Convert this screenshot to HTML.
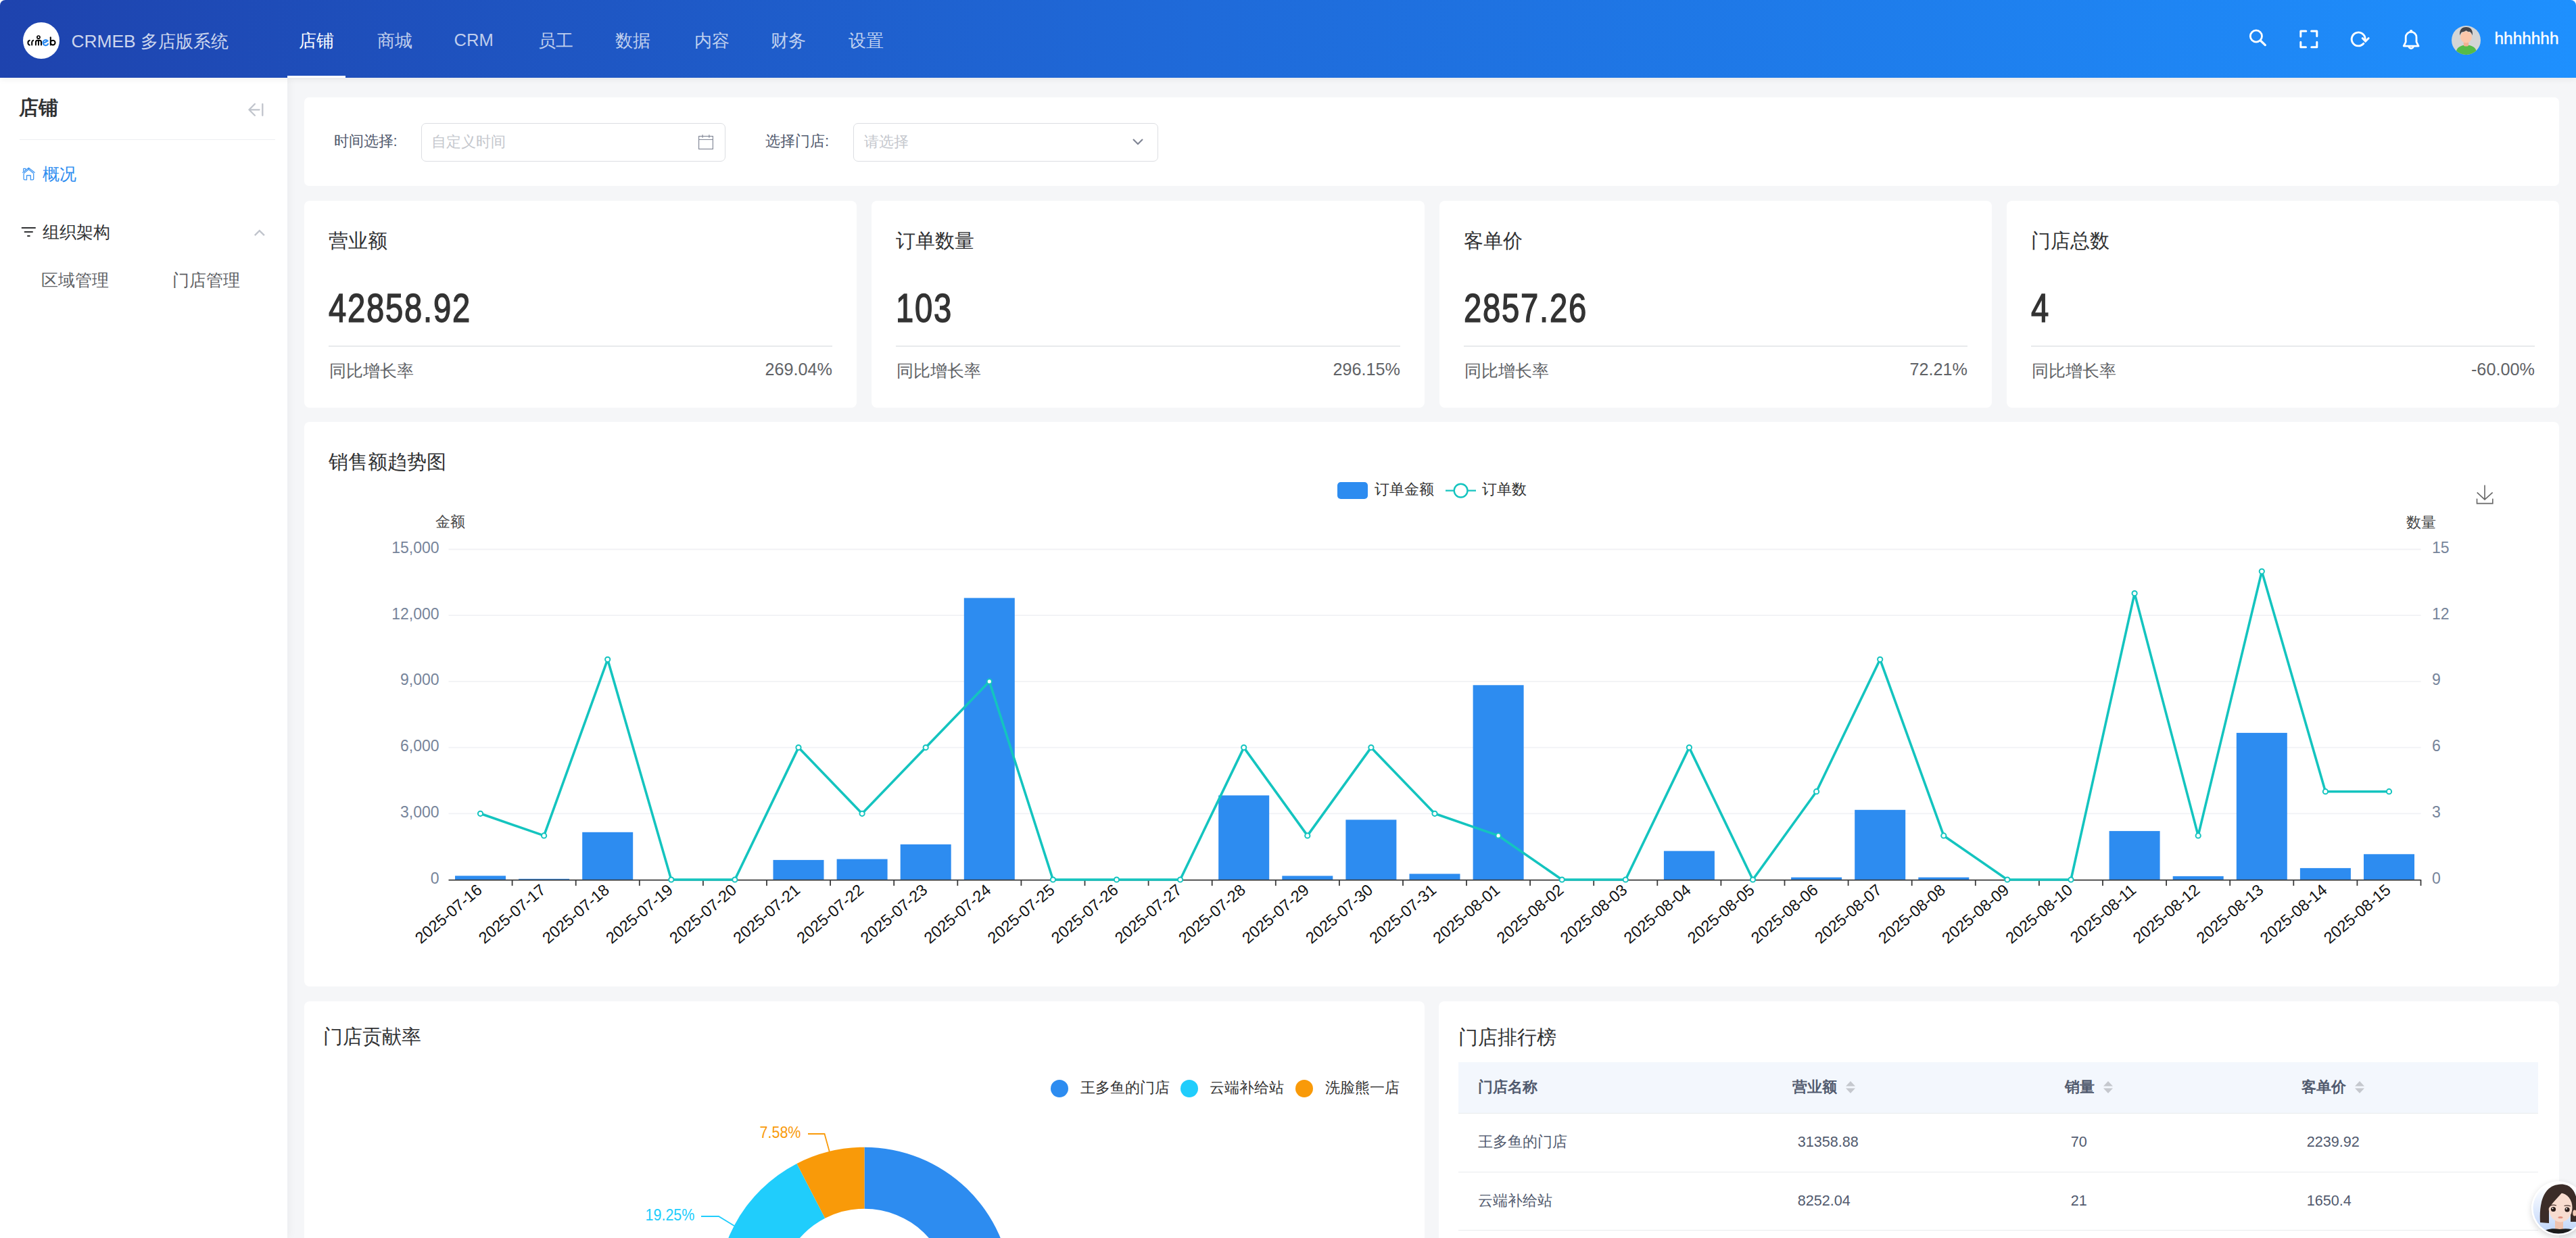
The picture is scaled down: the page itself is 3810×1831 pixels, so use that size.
<!DOCTYPE html>
<html><head><meta charset="utf-8"><title>CRMEB</title>
<style>
html,body{margin:0;padding:0;width:3810px;height:1831px;overflow:hidden;background:#fff;font-family:'Liberation Sans', sans-serif;}
.t{position:absolute;white-space:nowrap;}
.b{position:absolute;box-sizing:border-box;}
svg{position:absolute;overflow:visible;}
</style></head><body>

<div class="b" style="left:425px;top:115px;width:3385px;height:1716px;background:#f5f6f8;"></div>
<div class="b" style="left:0px;top:115px;width:425px;height:1716px;background:#fff;box-shadow:2px 0 12px rgba(0,21,41,0.05);"></div>
<div class="b" style="left:0;top:0;width:3810px;height:115px;border-radius:8px 8px 0 0;background:linear-gradient(90deg,#1e43ae 0%,#1f69d8 45%,#1e90fe 100%);box-shadow:0 2px 10px rgba(0,0,0,0.07);"></div>
<div class="b" style="left:34px;top:33px;width:54px;height:54px;border-radius:50%;background:#fff;"></div>
<svg style="left:0;top:0" width="100" height="100" viewBox="0 0 100 100" fill="none" stroke="#000" stroke-width="2" stroke-linecap="round" stroke-linejoin="round">
<path d="M43.8 59.8A3.6 3.6 0 0 0 43.8 66.6"/>
<path d="M47.2 66.4V62.4Q47.4 60.2 49.3 59.7"/>
<path d="M52.9 66.6V62.2Q52.9 59.7 55.4 59.7H58.5Q61 59.7 61 62.2V66.6M56.95 59.7V66.6"/>
<circle cx="56.95" cy="55.1" r="2.1" stroke-width="1.7"/>
<path d="M65.6 63.2L70.6 60.5A4 4 0 1 0 71.1 64.9" stroke="#2d8cf0" stroke-width="2.2"/>
<path d="M74.8 55.3V66.6"/><circle cx="78.2" cy="63.1" r="3.4"/>
</svg>
<div class="t" style="left:105.4px;top:47.8px;font-size:26.4px;line-height:26.4px;color:rgba(255,255,255,0.78);font-weight:normal;">CRMEB <span style="font-size:26px">多店版系统</span></div>
<div class="t" style="left:441.5px;top:46.7px;font-size:26.2px;line-height:26.2px;color:#fff;font-weight:normal;">店铺</div>
<div class="t" style="left:557.5px;top:46.7px;font-size:26.2px;line-height:26.2px;color:rgba(255,255,255,0.72);font-weight:normal;">商城</div>
<div class="t" style="left:671.5px;top:46.9px;font-size:25.6px;line-height:25.6px;color:rgba(255,255,255,0.72);font-weight:normal;">CRM</div>
<div class="t" style="left:795.5px;top:46.7px;font-size:26.2px;line-height:26.2px;color:rgba(255,255,255,0.72);font-weight:normal;">员工</div>
<div class="t" style="left:909.5px;top:46.7px;font-size:26.2px;line-height:26.2px;color:rgba(255,255,255,0.72);font-weight:normal;">数据</div>
<div class="t" style="left:1026.5px;top:46.7px;font-size:26.2px;line-height:26.2px;color:rgba(255,255,255,0.72);font-weight:normal;">内容</div>
<div class="t" style="left:1139.5px;top:46.7px;font-size:26.2px;line-height:26.2px;color:rgba(255,255,255,0.72);font-weight:normal;">财务</div>
<div class="t" style="left:1254.5px;top:46.7px;font-size:26.2px;line-height:26.2px;color:rgba(255,255,255,0.72);font-weight:normal;">设置</div>
<div class="b" style="left:425px;top:112px;width:86px;height:3px;background:#fff;"></div>
<svg style="left:0;top:0" width="3810" height="115" viewBox="0 0 3810 115" fill="none" stroke="#fff">
<circle cx="3336.9" cy="53.5" r="8.6" stroke-width="2.8"/>
<line x1="3343.6" y1="60.2" x2="3350.3" y2="66.6" stroke-width="3.3" stroke-linecap="round"/>
<path d="M3402.8 54V46.1h8M3418.6 46.1h8.2V53.4M3426.8 62.3v7.5h-8M3410.5 69.8h-7.7V62.3" stroke-width="3" stroke-linecap="round" stroke-linejoin="round"/>
<path d="M3495.9 64.3A10 10 0 1 1 3498.2 58" stroke-width="2.9" stroke-linecap="round"/>
<path d="M3494.2 56.6L3498.7 61.2L3503.2 56.6" stroke-width="2.9" stroke-linecap="round"/>
<path d="M3558.2 62V55.2A7.9 8 0 0 1 3574 55.2V62L3577 68.1H3555.2Z" stroke-width="2.8" stroke-linejoin="round"/>
<circle cx="3566.1" cy="46.2" r="1.6" fill="#fff" stroke-width="1.4"/>
<path d="M3562.6 68.2A3.5 3.4 0 0 0 3569.6 68.2" stroke-width="2.6"/>
</svg>
<svg style="left:3626px;top:38px" width="43" height="43" viewBox="0 0 43 43">
<defs><clipPath id="av"><circle cx="21.5" cy="21.5" r="21.5"/></clipPath></defs>
<g clip-path="url(#av)">
<rect width="43" height="43" fill="#d3d5d6"/>
<ellipse cx="21.8" cy="39" rx="15" ry="10.5" fill="#56bb48"/>
<rect x="17.8" y="23" width="7.3" height="7.5" rx="2" fill="#f2b092"/>
<ellipse cx="21.5" cy="16.9" rx="8.4" ry="8.6" fill="#fcc6a9"/>
<path d="M12.3 14.5C11 6.5 15 2 21.5 2C28 2 32 6.5 30.8 14.5C30 11.5 28.5 9.5 26.5 8.8C24.5 9.2 22.5 8.3 21.5 7C20 8.5 17 9.2 15 9.5C13.8 10.8 12.8 12.5 12.3 14.5Z" fill="#454449"/>
</g></svg>
<div class="t" style="left:3689.5px;top:45.3px;font-size:24.4px;line-height:24.4px;color:#fff;font-weight:normal;-webkit-text-stroke:0.4px #fff;">hhhhhhh</div>
<div class="t" style="left:28.4px;top:145.1px;font-size:28.8px;line-height:28.8px;color:#303133;font-weight:bold;">店铺</div>
<svg style="left:355px;top:145px" width="45" height="35" viewBox="0 0 45 35" fill="none" stroke="#c0c4cc" stroke-width="2.3" stroke-linecap="round" stroke-linejoin="round">
<path d="M28.6 17.3H13.8M21.9 8.8L13.4 17.3L21.9 25.8M33.3 8.8V25.8"/></svg>
<div class="b" style="left:29px;top:205.5px;width:378px;height:1.5px;background:#eceef1;height:1.2px;"></div>
<svg style="left:25px;top:240px" width="35" height="35" viewBox="0 0 35 35" fill="none" stroke="#3d95f2" stroke-width="1.3" stroke-linejoin="round">
<path d="M8.3 15.4L17.4 8.3L26.6 15.4M10.1 16.4L17.4 10.6L24.7 16.4"/>
<path d="M10.1 16.4V24.6Q10.1 25.9 11.4 25.9H14.5V19.5H20.3V25.9H23.4Q24.7 25.9 24.7 24.6V16.4"/>
<path d="M9.8 13.6V9.3H12.9V11.4"/></svg>
<div class="t" style="left:63.0px;top:245.2px;font-size:25.2px;line-height:25.2px;color:#2d8cf0;font-weight:normal;">概况</div>
<svg style="left:30px;top:332px" width="26" height="22" viewBox="0 0 26 22" fill="none" stroke="#303133" stroke-width="2">
<path d="M2.6 5H22M6.6 10.95H18M11 16.9H13.8" stroke-linecap="round"/></svg>
<div class="t" style="left:63.0px;top:331.2px;font-size:25.2px;line-height:25.2px;color:#303133;font-weight:normal;">组织架构</div>
<svg style="left:373px;top:335px" width="22" height="18" viewBox="0 0 22 18" fill="none" stroke="#c0c4cc" stroke-width="2.4">
<path d="M3.8 13.2L10.8 6.2L17.9 13.2"/></svg>
<div class="t" style="left:60.5px;top:402.2px;font-size:25.2px;line-height:25.2px;color:#606266;font-weight:normal;">区域管理</div>
<div class="t" style="left:254.5px;top:402.2px;font-size:25.2px;line-height:25.2px;color:#606266;font-weight:normal;">门店管理</div>
<div class="b" style="left:450px;top:144px;width:3335px;height:131px;background:#fff;border-radius:7px;"></div>
<div class="t" style="left:493.6px;top:198.3px;font-size:22.2px;line-height:22.2px;color:#515a6e;font-weight:normal;">时间选择:</div>
<div class="b" style="left:623px;top:182px;width:450px;height:57px;border:1.8px solid #dcdee2;border-radius:7px;background:#fff;"></div>
<div class="t" style="left:637.6px;top:199.4px;font-size:21.6px;line-height:21.6px;color:#c5c8ce;font-weight:normal;">自定义时间</div>
<svg style="left:1030px;top:197px" width="28" height="28" viewBox="0 0 28 28" fill="none" stroke="#808695" stroke-width="1.15">
<rect x="3.6" y="4.5" width="20.8" height="18.9"/><path d="M3.6 9.5h20.8M9.1 2.2v4.5M18.9 2.2v4.5"/></svg>
<div class="t" style="left:1132.1px;top:198.3px;font-size:22.2px;line-height:22.2px;color:#515a6e;font-weight:normal;">选择门店:</div>
<div class="b" style="left:1262px;top:182px;width:451px;height:57px;border:1.8px solid #dcdee2;border-radius:7px;background:#fff;"></div>
<div class="t" style="left:1277.6px;top:199.4px;font-size:21.6px;line-height:21.6px;color:#c5c8ce;font-weight:normal;">请选择</div>
<svg style="left:1672px;top:200px" width="22" height="20" viewBox="0 0 22 20" fill="none" stroke="#808695" stroke-width="2.2">
<path d="M4 6l7 7 7-7"/></svg>
<div class="b" style="left:450px;top:297px;width:817px;height:306px;background:#fff;border-radius:8px;"></div>
<div class="t" style="left:486.4px;top:342.1px;font-size:28.8px;line-height:28.8px;color:#303133;font-weight:normal;">营业额</div>
<div class="t" style="left:486px;top:426.5px;font-size:59px;line-height:59px;font-weight:normal;color:#333;-webkit-text-stroke:1.5px #333;transform:scaleX(0.8);transform-origin:0 0;letter-spacing:2.2px;">42858.92</div>
<div class="b" style="left:486px;top:511px;width:745px;height:2px;background:#e8eaec;height:1.6px;"></div>
<div class="t" style="left:486.5px;top:536.2px;font-size:25.2px;line-height:25.2px;color:#606266;font-weight:normal;">同比增长率</div>
<div class="t" style="right:2579.2px;top:534.0px;font-size:25.2px;line-height:25.2px;color:#606266;font-weight:normal;text-align:right;">269.04%</div>
<div class="b" style="left:1289px;top:297px;width:818px;height:306px;background:#fff;border-radius:8px;"></div>
<div class="t" style="left:1325.4px;top:342.1px;font-size:28.8px;line-height:28.8px;color:#303133;font-weight:normal;">订单数量</div>
<div class="t" style="left:1325px;top:426.5px;font-size:59px;line-height:59px;font-weight:normal;color:#333;-webkit-text-stroke:1.5px #333;transform:scaleX(0.8);transform-origin:0 0;letter-spacing:2.2px;">103</div>
<div class="b" style="left:1325px;top:511px;width:746px;height:2px;background:#e8eaec;height:1.6px;"></div>
<div class="t" style="left:1325.5px;top:536.2px;font-size:25.2px;line-height:25.2px;color:#606266;font-weight:normal;">同比增长率</div>
<div class="t" style="right:1739.2px;top:534.0px;font-size:25.2px;line-height:25.2px;color:#606266;font-weight:normal;text-align:right;">296.15%</div>
<div class="b" style="left:2129px;top:297px;width:817px;height:306px;background:#fff;border-radius:8px;"></div>
<div class="t" style="left:2165.4px;top:342.1px;font-size:28.8px;line-height:28.8px;color:#303133;font-weight:normal;">客单价</div>
<div class="t" style="left:2165px;top:426.5px;font-size:59px;line-height:59px;font-weight:normal;color:#333;-webkit-text-stroke:1.5px #333;transform:scaleX(0.8);transform-origin:0 0;letter-spacing:2.2px;">2857.26</div>
<div class="b" style="left:2165px;top:511px;width:745px;height:2px;background:#e8eaec;height:1.6px;"></div>
<div class="t" style="left:2165.5px;top:536.2px;font-size:25.2px;line-height:25.2px;color:#606266;font-weight:normal;">同比增长率</div>
<div class="t" style="right:900.2px;top:534.0px;font-size:25.2px;line-height:25.2px;color:#606266;font-weight:normal;text-align:right;">72.21%</div>
<div class="b" style="left:2968px;top:297px;width:817px;height:306px;background:#fff;border-radius:8px;"></div>
<div class="t" style="left:3004.4px;top:342.1px;font-size:28.8px;line-height:28.8px;color:#303133;font-weight:normal;">门店总数</div>
<div class="t" style="left:3004px;top:426.5px;font-size:59px;line-height:59px;font-weight:normal;color:#333;-webkit-text-stroke:1.5px #333;transform:scaleX(0.8);transform-origin:0 0;letter-spacing:2.2px;">4</div>
<div class="b" style="left:3004px;top:511px;width:745px;height:2px;background:#e8eaec;height:1.6px;"></div>
<div class="t" style="left:3004.5px;top:536.2px;font-size:25.2px;line-height:25.2px;color:#606266;font-weight:normal;">同比增长率</div>
<div class="t" style="right:61.2px;top:534.0px;font-size:25.2px;line-height:25.2px;color:#606266;font-weight:normal;text-align:right;">-60.00%</div>
<div class="b" style="left:450px;top:624px;width:3335px;height:835px;background:#fff;border-radius:8px;"></div>
<div class="t" style="left:486.4px;top:669.1px;font-size:28.8px;line-height:28.8px;color:#303133;font-weight:normal;">销售额趋势图</div>
<svg style="left:0;top:0" width="3810" height="1831" viewBox="0 0 3810 1831">
<line x1="663.5" y1="1203.3" x2="3580.5" y2="1203.3" stroke="#f1f2f5" stroke-width="1.8"/>
<line x1="663.5" y1="1105.6" x2="3580.5" y2="1105.6" stroke="#f1f2f5" stroke-width="1.8"/>
<line x1="663.5" y1="1007.9" x2="3580.5" y2="1007.9" stroke="#f1f2f5" stroke-width="1.8"/>
<line x1="663.5" y1="910.2" x2="3580.5" y2="910.2" stroke="#f1f2f5" stroke-width="1.8"/>
<line x1="663.5" y1="812.5" x2="3580.5" y2="812.5" stroke="#f1f2f5" stroke-width="1.8"/>
<text x="649.6" y="1306.5" text-anchor="end" font-size="23" fill="#76849a">0</text>
<text x="3597" y="1306.5" text-anchor="start" font-size="23" fill="#76849a">0</text>
<text x="649.6" y="1208.8" text-anchor="end" font-size="23" fill="#76849a">3,000</text>
<text x="3597" y="1208.8" text-anchor="start" font-size="23" fill="#76849a">3</text>
<text x="649.6" y="1111.1" text-anchor="end" font-size="23" fill="#76849a">6,000</text>
<text x="3597" y="1111.1" text-anchor="start" font-size="23" fill="#76849a">6</text>
<text x="649.6" y="1013.4" text-anchor="end" font-size="23" fill="#76849a">9,000</text>
<text x="3597" y="1013.4" text-anchor="start" font-size="23" fill="#76849a">9</text>
<text x="649.6" y="915.7" text-anchor="end" font-size="23" fill="#76849a">12,000</text>
<text x="3597" y="915.7" text-anchor="start" font-size="23" fill="#76849a">12</text>
<text x="649.6" y="818.0" text-anchor="end" font-size="23" fill="#76849a">15,000</text>
<text x="3597" y="818.0" text-anchor="start" font-size="23" fill="#76849a">15</text>
<rect x="673.0" y="1295.3" width="75" height="5.7" fill="#2d8cf0"/>
<rect x="767.1" y="1299.8" width="75" height="1.2" fill="#2d8cf0"/>
<rect x="861.2" y="1230.8" width="75" height="70.2" fill="#2d8cf0"/>
<rect x="1143.5" y="1271.9" width="75" height="29.1" fill="#2d8cf0"/>
<rect x="1237.6" y="1270.6" width="75" height="30.4" fill="#2d8cf0"/>
<rect x="1331.7" y="1248.8" width="75" height="52.2" fill="#2d8cf0"/>
<rect x="1425.8" y="884.4" width="75" height="416.6" fill="#2d8cf0"/>
<rect x="1802.2" y="1176.4" width="75" height="124.6" fill="#2d8cf0"/>
<rect x="1896.3" y="1295.4" width="75" height="5.6" fill="#2d8cf0"/>
<rect x="1990.4" y="1212.4" width="75" height="88.6" fill="#2d8cf0"/>
<rect x="2084.5" y="1292.4" width="75" height="8.6" fill="#2d8cf0"/>
<rect x="2178.6" y="1013.3" width="75" height="287.7" fill="#2d8cf0"/>
<rect x="2460.9" y="1258.6" width="75" height="42.4" fill="#2d8cf0"/>
<rect x="2649.1" y="1297.6" width="75" height="3.4" fill="#2d8cf0"/>
<rect x="2743.2" y="1197.8" width="75" height="103.2" fill="#2d8cf0"/>
<rect x="2837.3" y="1297.6" width="75" height="3.4" fill="#2d8cf0"/>
<rect x="3119.6" y="1229.1" width="75" height="71.9" fill="#2d8cf0"/>
<rect x="3213.7" y="1295.9" width="75" height="5.1" fill="#2d8cf0"/>
<rect x="3307.8" y="1083.9" width="75" height="217.1" fill="#2d8cf0"/>
<rect x="3401.9" y="1283.9" width="75" height="17.1" fill="#2d8cf0"/>
<rect x="3496.0" y="1263.3" width="75" height="37.7" fill="#2d8cf0"/>
<line x1="663.5" y1="1301.6" x2="3580.5" y2="1301.6" stroke="#3a3a3a" stroke-width="1.8"/>
<line x1="757.6" y1="1301.0" x2="757.6" y2="1310.0" stroke="#3a3a3a" stroke-width="1.8"/>
<line x1="851.7" y1="1301.0" x2="851.7" y2="1310.0" stroke="#3a3a3a" stroke-width="1.8"/>
<line x1="945.8" y1="1301.0" x2="945.8" y2="1310.0" stroke="#3a3a3a" stroke-width="1.8"/>
<line x1="1039.9" y1="1301.0" x2="1039.9" y2="1310.0" stroke="#3a3a3a" stroke-width="1.8"/>
<line x1="1134.0" y1="1301.0" x2="1134.0" y2="1310.0" stroke="#3a3a3a" stroke-width="1.8"/>
<line x1="1228.1" y1="1301.0" x2="1228.1" y2="1310.0" stroke="#3a3a3a" stroke-width="1.8"/>
<line x1="1322.2" y1="1301.0" x2="1322.2" y2="1310.0" stroke="#3a3a3a" stroke-width="1.8"/>
<line x1="1416.3" y1="1301.0" x2="1416.3" y2="1310.0" stroke="#3a3a3a" stroke-width="1.8"/>
<line x1="1510.4" y1="1301.0" x2="1510.4" y2="1310.0" stroke="#3a3a3a" stroke-width="1.8"/>
<line x1="1604.5" y1="1301.0" x2="1604.5" y2="1310.0" stroke="#3a3a3a" stroke-width="1.8"/>
<line x1="1698.6" y1="1301.0" x2="1698.6" y2="1310.0" stroke="#3a3a3a" stroke-width="1.8"/>
<line x1="1792.7" y1="1301.0" x2="1792.7" y2="1310.0" stroke="#3a3a3a" stroke-width="1.8"/>
<line x1="1886.8" y1="1301.0" x2="1886.8" y2="1310.0" stroke="#3a3a3a" stroke-width="1.8"/>
<line x1="1980.9" y1="1301.0" x2="1980.9" y2="1310.0" stroke="#3a3a3a" stroke-width="1.8"/>
<line x1="2075.0" y1="1301.0" x2="2075.0" y2="1310.0" stroke="#3a3a3a" stroke-width="1.8"/>
<line x1="2169.0" y1="1301.0" x2="2169.0" y2="1310.0" stroke="#3a3a3a" stroke-width="1.8"/>
<line x1="2263.1" y1="1301.0" x2="2263.1" y2="1310.0" stroke="#3a3a3a" stroke-width="1.8"/>
<line x1="2357.2" y1="1301.0" x2="2357.2" y2="1310.0" stroke="#3a3a3a" stroke-width="1.8"/>
<line x1="2451.3" y1="1301.0" x2="2451.3" y2="1310.0" stroke="#3a3a3a" stroke-width="1.8"/>
<line x1="2545.4" y1="1301.0" x2="2545.4" y2="1310.0" stroke="#3a3a3a" stroke-width="1.8"/>
<line x1="2639.5" y1="1301.0" x2="2639.5" y2="1310.0" stroke="#3a3a3a" stroke-width="1.8"/>
<line x1="2733.6" y1="1301.0" x2="2733.6" y2="1310.0" stroke="#3a3a3a" stroke-width="1.8"/>
<line x1="2827.7" y1="1301.0" x2="2827.7" y2="1310.0" stroke="#3a3a3a" stroke-width="1.8"/>
<line x1="2921.8" y1="1301.0" x2="2921.8" y2="1310.0" stroke="#3a3a3a" stroke-width="1.8"/>
<line x1="3015.9" y1="1301.0" x2="3015.9" y2="1310.0" stroke="#3a3a3a" stroke-width="1.8"/>
<line x1="3110.0" y1="1301.0" x2="3110.0" y2="1310.0" stroke="#3a3a3a" stroke-width="1.8"/>
<line x1="3204.1" y1="1301.0" x2="3204.1" y2="1310.0" stroke="#3a3a3a" stroke-width="1.8"/>
<line x1="3298.2" y1="1301.0" x2="3298.2" y2="1310.0" stroke="#3a3a3a" stroke-width="1.8"/>
<line x1="3392.3" y1="1301.0" x2="3392.3" y2="1310.0" stroke="#3a3a3a" stroke-width="1.8"/>
<line x1="3486.4" y1="1301.0" x2="3486.4" y2="1310.0" stroke="#3a3a3a" stroke-width="1.8"/>
<line x1="3580.5" y1="1301.0" x2="3580.5" y2="1310.0" stroke="#3a3a3a" stroke-width="1.8"/>
<path d="M710.5,1203.3 L804.6,1235.9 L898.7,975.3 L992.8,1301.0 L1086.9,1301.0 L1181.0,1105.6 L1275.1,1203.3 L1369.2,1105.6 L1463.3,1007.9 L1557.4,1301.0 L1651.5,1301.0 L1745.6,1301.0 L1839.7,1105.6 L1933.8,1235.9 L2027.9,1105.6 L2122.0,1203.3 L2216.1,1235.9 L2310.2,1301.0 L2404.3,1301.0 L2498.4,1105.6 L2592.5,1301.0 L2686.6,1170.7 L2780.7,975.3 L2874.8,1235.9 L2968.9,1301.0 L3063.0,1301.0 L3157.1,877.6 L3251.2,1235.9 L3345.3,845.1 L3439.4,1170.7 L3533.5,1170.7" fill="none" stroke="#14c4bf" stroke-width="3.6" stroke-linejoin="bevel"/>
<circle cx="710.5" cy="1203.3" r="3.6" fill="#fff" stroke="#14c4bf" stroke-width="2"/>
<circle cx="804.6" cy="1235.9" r="3.6" fill="#fff" stroke="#14c4bf" stroke-width="2"/>
<circle cx="898.7" cy="975.3" r="3.6" fill="#fff" stroke="#14c4bf" stroke-width="2"/>
<circle cx="992.8" cy="1301.0" r="3.6" fill="#fff" stroke="#14c4bf" stroke-width="2"/>
<circle cx="1086.9" cy="1301.0" r="3.6" fill="#fff" stroke="#14c4bf" stroke-width="2"/>
<circle cx="1181.0" cy="1105.6" r="3.6" fill="#fff" stroke="#14c4bf" stroke-width="2"/>
<circle cx="1275.1" cy="1203.3" r="3.6" fill="#fff" stroke="#14c4bf" stroke-width="2"/>
<circle cx="1369.2" cy="1105.6" r="3.6" fill="#fff" stroke="#14c4bf" stroke-width="2"/>
<circle cx="1463.3" cy="1007.9" r="3.6" fill="#fff" stroke="#14c4bf" stroke-width="2"/>
<circle cx="1557.4" cy="1301.0" r="3.6" fill="#fff" stroke="#14c4bf" stroke-width="2"/>
<circle cx="1651.5" cy="1301.0" r="3.6" fill="#fff" stroke="#14c4bf" stroke-width="2"/>
<circle cx="1745.6" cy="1301.0" r="3.6" fill="#fff" stroke="#14c4bf" stroke-width="2"/>
<circle cx="1839.7" cy="1105.6" r="3.6" fill="#fff" stroke="#14c4bf" stroke-width="2"/>
<circle cx="1933.8" cy="1235.9" r="3.6" fill="#fff" stroke="#14c4bf" stroke-width="2"/>
<circle cx="2027.9" cy="1105.6" r="3.6" fill="#fff" stroke="#14c4bf" stroke-width="2"/>
<circle cx="2122.0" cy="1203.3" r="3.6" fill="#fff" stroke="#14c4bf" stroke-width="2"/>
<circle cx="2216.1" cy="1235.9" r="3.6" fill="#fff" stroke="#14c4bf" stroke-width="2"/>
<circle cx="2310.2" cy="1301.0" r="3.6" fill="#fff" stroke="#14c4bf" stroke-width="2"/>
<circle cx="2404.3" cy="1301.0" r="3.6" fill="#fff" stroke="#14c4bf" stroke-width="2"/>
<circle cx="2498.4" cy="1105.6" r="3.6" fill="#fff" stroke="#14c4bf" stroke-width="2"/>
<circle cx="2592.5" cy="1301.0" r="3.6" fill="#fff" stroke="#14c4bf" stroke-width="2"/>
<circle cx="2686.6" cy="1170.7" r="3.6" fill="#fff" stroke="#14c4bf" stroke-width="2"/>
<circle cx="2780.7" cy="975.3" r="3.6" fill="#fff" stroke="#14c4bf" stroke-width="2"/>
<circle cx="2874.8" cy="1235.9" r="3.6" fill="#fff" stroke="#14c4bf" stroke-width="2"/>
<circle cx="2968.9" cy="1301.0" r="3.6" fill="#fff" stroke="#14c4bf" stroke-width="2"/>
<circle cx="3063.0" cy="1301.0" r="3.6" fill="#fff" stroke="#14c4bf" stroke-width="2"/>
<circle cx="3157.1" cy="877.6" r="3.6" fill="#fff" stroke="#14c4bf" stroke-width="2"/>
<circle cx="3251.2" cy="1235.9" r="3.6" fill="#fff" stroke="#14c4bf" stroke-width="2"/>
<circle cx="3345.3" cy="845.1" r="3.6" fill="#fff" stroke="#14c4bf" stroke-width="2"/>
<circle cx="3439.4" cy="1170.7" r="3.6" fill="#fff" stroke="#14c4bf" stroke-width="2"/>
<circle cx="3533.5" cy="1170.7" r="3.6" fill="#fff" stroke="#14c4bf" stroke-width="2"/>
<text x="710.5" y="1314" text-anchor="end" dominant-baseline="middle" font-size="23.6" fill="#111" transform="rotate(-40.3 710.5 1314)">2025-07-16</text>
<text x="804.6" y="1314" text-anchor="end" dominant-baseline="middle" font-size="23.6" fill="#111" transform="rotate(-40.3 804.6 1314)">2025-07-17</text>
<text x="898.7" y="1314" text-anchor="end" dominant-baseline="middle" font-size="23.6" fill="#111" transform="rotate(-40.3 898.7 1314)">2025-07-18</text>
<text x="992.8" y="1314" text-anchor="end" dominant-baseline="middle" font-size="23.6" fill="#111" transform="rotate(-40.3 992.8 1314)">2025-07-19</text>
<text x="1086.9" y="1314" text-anchor="end" dominant-baseline="middle" font-size="23.6" fill="#111" transform="rotate(-40.3 1086.9 1314)">2025-07-20</text>
<text x="1181.0" y="1314" text-anchor="end" dominant-baseline="middle" font-size="23.6" fill="#111" transform="rotate(-40.3 1181.0 1314)">2025-07-21</text>
<text x="1275.1" y="1314" text-anchor="end" dominant-baseline="middle" font-size="23.6" fill="#111" transform="rotate(-40.3 1275.1 1314)">2025-07-22</text>
<text x="1369.2" y="1314" text-anchor="end" dominant-baseline="middle" font-size="23.6" fill="#111" transform="rotate(-40.3 1369.2 1314)">2025-07-23</text>
<text x="1463.3" y="1314" text-anchor="end" dominant-baseline="middle" font-size="23.6" fill="#111" transform="rotate(-40.3 1463.3 1314)">2025-07-24</text>
<text x="1557.4" y="1314" text-anchor="end" dominant-baseline="middle" font-size="23.6" fill="#111" transform="rotate(-40.3 1557.4 1314)">2025-07-25</text>
<text x="1651.5" y="1314" text-anchor="end" dominant-baseline="middle" font-size="23.6" fill="#111" transform="rotate(-40.3 1651.5 1314)">2025-07-26</text>
<text x="1745.6" y="1314" text-anchor="end" dominant-baseline="middle" font-size="23.6" fill="#111" transform="rotate(-40.3 1745.6 1314)">2025-07-27</text>
<text x="1839.7" y="1314" text-anchor="end" dominant-baseline="middle" font-size="23.6" fill="#111" transform="rotate(-40.3 1839.7 1314)">2025-07-28</text>
<text x="1933.8" y="1314" text-anchor="end" dominant-baseline="middle" font-size="23.6" fill="#111" transform="rotate(-40.3 1933.8 1314)">2025-07-29</text>
<text x="2027.9" y="1314" text-anchor="end" dominant-baseline="middle" font-size="23.6" fill="#111" transform="rotate(-40.3 2027.9 1314)">2025-07-30</text>
<text x="2122.0" y="1314" text-anchor="end" dominant-baseline="middle" font-size="23.6" fill="#111" transform="rotate(-40.3 2122.0 1314)">2025-07-31</text>
<text x="2216.1" y="1314" text-anchor="end" dominant-baseline="middle" font-size="23.6" fill="#111" transform="rotate(-40.3 2216.1 1314)">2025-08-01</text>
<text x="2310.2" y="1314" text-anchor="end" dominant-baseline="middle" font-size="23.6" fill="#111" transform="rotate(-40.3 2310.2 1314)">2025-08-02</text>
<text x="2404.3" y="1314" text-anchor="end" dominant-baseline="middle" font-size="23.6" fill="#111" transform="rotate(-40.3 2404.3 1314)">2025-08-03</text>
<text x="2498.4" y="1314" text-anchor="end" dominant-baseline="middle" font-size="23.6" fill="#111" transform="rotate(-40.3 2498.4 1314)">2025-08-04</text>
<text x="2592.5" y="1314" text-anchor="end" dominant-baseline="middle" font-size="23.6" fill="#111" transform="rotate(-40.3 2592.5 1314)">2025-08-05</text>
<text x="2686.6" y="1314" text-anchor="end" dominant-baseline="middle" font-size="23.6" fill="#111" transform="rotate(-40.3 2686.6 1314)">2025-08-06</text>
<text x="2780.7" y="1314" text-anchor="end" dominant-baseline="middle" font-size="23.6" fill="#111" transform="rotate(-40.3 2780.7 1314)">2025-08-07</text>
<text x="2874.8" y="1314" text-anchor="end" dominant-baseline="middle" font-size="23.6" fill="#111" transform="rotate(-40.3 2874.8 1314)">2025-08-08</text>
<text x="2968.9" y="1314" text-anchor="end" dominant-baseline="middle" font-size="23.6" fill="#111" transform="rotate(-40.3 2968.9 1314)">2025-08-09</text>
<text x="3063.0" y="1314" text-anchor="end" dominant-baseline="middle" font-size="23.6" fill="#111" transform="rotate(-40.3 3063.0 1314)">2025-08-10</text>
<text x="3157.1" y="1314" text-anchor="end" dominant-baseline="middle" font-size="23.6" fill="#111" transform="rotate(-40.3 3157.1 1314)">2025-08-11</text>
<text x="3251.2" y="1314" text-anchor="end" dominant-baseline="middle" font-size="23.6" fill="#111" transform="rotate(-40.3 3251.2 1314)">2025-08-12</text>
<text x="3345.3" y="1314" text-anchor="end" dominant-baseline="middle" font-size="23.6" fill="#111" transform="rotate(-40.3 3345.3 1314)">2025-08-13</text>
<text x="3439.4" y="1314" text-anchor="end" dominant-baseline="middle" font-size="23.6" fill="#111" transform="rotate(-40.3 3439.4 1314)">2025-08-14</text>
<text x="3533.5" y="1314" text-anchor="end" dominant-baseline="middle" font-size="23.6" fill="#111" transform="rotate(-40.3 3533.5 1314)">2025-08-15</text>
</svg>
<div class="b" style="left:1978px;top:713px;width:45px;height:25px;border-radius:5px;background:#2d8cf0;"></div>
<div class="t" style="left:2033.2px;top:713.4px;font-size:21.6px;line-height:21.6px;color:#333;font-weight:normal;">订单金额</div>
<svg style="left:2136px;top:714px" width="50" height="24" viewBox="0 0 50 24">
<line x1="2" y1="11.6" x2="47" y2="11.6" stroke="#14c4bf" stroke-width="2.3"/>
<circle cx="24.6" cy="11.6" r="9.9" fill="#fff" stroke="#14c4bf" stroke-width="2.4"/></svg>
<div class="t" style="left:2192.1px;top:713.4px;font-size:21.6px;line-height:21.6px;color:#333;font-weight:normal;">订单数</div>
<svg style="left:3660px;top:714px" width="32" height="34" viewBox="0 0 32 34" fill="none" stroke="#666" stroke-width="1.6">
<path d="M15 3.5V24.5M3.7 14.4L15 24.9L26.6 14.4M3.5 23.6V30.6H26.8V23.6"/></svg>
<div class="t" style="left:643.6px;top:761.4px;font-size:21.6px;line-height:21.6px;color:#464646;font-weight:normal;">金额</div>
<div class="t" style="left:3558.6px;top:762.4px;font-size:21.6px;line-height:21.6px;color:#464646;font-weight:normal;">数量</div>
<div class="b" style="left:450px;top:1481px;width:1657px;height:419px;background:#fff;border-radius:8px;"></div>
<div class="b" style="left:2128px;top:1481px;width:1657px;height:419px;background:#fff;border-radius:8px;"></div>
<div class="t" style="left:478.4px;top:1519.1px;font-size:28.8px;line-height:28.8px;color:#303133;font-weight:normal;">门店贡献率</div>
<div class="t" style="left:2157.4px;top:1519.6px;font-size:28.8px;line-height:28.8px;color:#303133;font-weight:normal;">门店排行榜</div>
<div class="b" style="left:1554px;top:1596.6px;width:26px;height:26px;border-radius:50%;background:#2d8cf0;"></div>
<div class="t" style="left:1598.1px;top:1598.4px;font-size:21.6px;line-height:21.6px;color:#333;font-weight:normal;">王多鱼的门店</div>
<div class="b" style="left:1746px;top:1596.6px;width:26px;height:26px;border-radius:50%;background:#20cdfc;"></div>
<div class="t" style="left:1788.6px;top:1598.4px;font-size:21.6px;line-height:21.6px;color:#333;font-weight:normal;">云端补给站</div>
<div class="b" style="left:1915.5px;top:1596.6px;width:26px;height:26px;border-radius:50%;background:#f99a09;"></div>
<div class="t" style="left:1959.6px;top:1598.4px;font-size:21.6px;line-height:21.6px;color:#333;font-weight:normal;">洗脸熊一店</div>
<svg style="left:0;top:0" width="3810" height="1831" viewBox="0 0 3810 1831">
<path d="M1278.50,1696.70 A218,218 0 1 1 1061.94,1939.71 L1152.34,1929.27 A127,127 0 1 0 1278.50,1787.70 Z" fill="#2d8cf0"/>
<path d="M1061.94,1939.71 A218,218 0 0 1 1178.55,1720.96 L1220.28,1801.83 A127,127 0 0 0 1152.34,1929.27 Z" fill="#20cdfc"/>
<path d="M1178.55,1720.96 A218,218 0 0 1 1278.50,1696.70 L1278.50,1787.70 A127,127 0 0 0 1220.28,1801.83 Z" fill="#f99a09"/>
<polyline points="1195,1677 1219.5,1677 1227,1704" fill="none" stroke="#f99a09" stroke-width="1.8"/>
<polyline points="1037,1799 1063,1799 1086,1813" fill="none" stroke="#20cdfc" stroke-width="1.8"/>
<text x="1123.5" y="1683.3" font-size="24.5" textLength="61" lengthAdjust="spacingAndGlyphs" fill="#f99a09">7.58%</text>
<text x="954.6" y="1804.9" font-size="24.5" textLength="72.7" lengthAdjust="spacingAndGlyphs" fill="#20cdfc">19.25%</text>
</svg>
<div class="b" style="left:2157px;top:1571px;width:1597px;height:76px;background:#f3f7fd;border-bottom:1.2px solid #e8eaec;"></div>
<div class="b" style="left:2157px;top:1732.5px;width:1597px;height:1.5px;background:#e9ebee;height:1.3px;"></div>
<div class="b" style="left:2157px;top:1818.5px;width:1597px;height:1.5px;background:#e9ebee;height:1.3px;"></div>
<div class="t" style="left:2185.6px;top:1597.4px;font-size:21.6px;line-height:21.6px;color:#515a6e;font-weight:bold;">门店名称</div>
<div class="t" style="left:2651.1px;top:1597.4px;font-size:21.6px;line-height:21.6px;color:#515a6e;font-weight:bold;">营业额</div>
<svg style="left:2728.5px;top:1598px" width="16" height="20" viewBox="0 0 16 20" fill="#c5c8ce">
<path d="M8 1l7 7.5H1zM8 19l7-7.5H1z"/></svg>
<div class="t" style="left:3054.2px;top:1597.4px;font-size:21.6px;line-height:21.6px;color:#515a6e;font-weight:bold;">销量</div>
<svg style="left:3110px;top:1598px" width="16" height="20" viewBox="0 0 16 20" fill="#c5c8ce">
<path d="M8 1l7 7.5H1zM8 19l7-7.5H1z"/></svg>
<div class="t" style="left:3403.6px;top:1597.4px;font-size:21.6px;line-height:21.6px;color:#515a6e;font-weight:bold;">客单价</div>
<svg style="left:3482px;top:1598px" width="16" height="20" viewBox="0 0 16 20" fill="#c5c8ce">
<path d="M8 1l7 7.5H1zM8 19l7-7.5H1z"/></svg>
<div class="t" style="left:2185.6px;top:1678.4px;font-size:21.6px;line-height:21.6px;color:#515a6e;font-weight:normal;">王多鱼的门店</div>
<div class="t" style="left:2658.7px;top:1677.5px;font-size:21.6px;line-height:21.6px;color:#515a6e;font-weight:normal;">31358.88</div>
<div class="t" style="left:3062.7px;top:1677.5px;font-size:21.6px;line-height:21.6px;color:#515a6e;font-weight:normal;">70</div>
<div class="t" style="left:3411.7px;top:1677.5px;font-size:21.6px;line-height:21.6px;color:#515a6e;font-weight:normal;">2239.92</div>
<div class="t" style="left:2185.6px;top:1765.4px;font-size:21.6px;line-height:21.6px;color:#515a6e;font-weight:normal;">云端补给站</div>
<div class="t" style="left:2658.7px;top:1764.5px;font-size:21.6px;line-height:21.6px;color:#515a6e;font-weight:normal;">8252.04</div>
<div class="t" style="left:3062.7px;top:1764.5px;font-size:21.6px;line-height:21.6px;color:#515a6e;font-weight:normal;">21</div>
<div class="t" style="left:3411.7px;top:1764.5px;font-size:21.6px;line-height:21.6px;color:#515a6e;font-weight:normal;">1650.4</div>
<div class="b" style="left:3744px;top:1746.5px;width:80px;height:80px;border-radius:50%;box-shadow:0 3px 10px rgba(0,0,0,0.16);overflow:hidden;background:#fff;">
<svg style="left:0;top:0" width="80" height="80" viewBox="0 0 80 80">
<defs><linearGradient id="abg" x1="0" y1="0" x2="0" y2="1"><stop offset="0.1" stop-color="#ffffff"/><stop offset="1" stop-color="#bcd3fa"/></linearGradient>
<clipPath id="acl"><circle cx="40" cy="40" r="37.5"/></clipPath></defs>
<circle cx="40" cy="40" r="40" fill="#fff"/>
<g clip-path="url(#acl)">
<rect width="80" height="80" fill="url(#abg)"/>
<path d="M13 61C11 30 19 5 44 4.5C63 4.5 71 22 69 60L58 60L58 30L26 30L26 62Z" fill="#3b2c28"/>
<rect x="35" y="54" width="12" height="18" fill="#efc2ae"/>
<ellipse cx="43" cy="39" rx="17.5" ry="21.5" fill="#f8dccf"/>
<ellipse cx="64" cy="47" rx="2.8" ry="4.5" fill="#f3cbb8"/>
<path d="M24.5 42C22 21 31 10 45 9.5C58 9.5 65 21 63 38C59 27 53 19 47.5 14C41 23 32 30 24.5 42Z" fill="#3b2c28"/>
<path d="M27.5 36.5Q32 34 37 36M48.5 36.5Q53 35 58 37" stroke="#4a3530" stroke-width="1.3" fill="none"/>
<circle cx="32.5" cy="41.5" r="3.6" fill="#2b1d1a"/><circle cx="53" cy="42" r="3.6" fill="#2b1d1a"/>
<circle cx="31.5" cy="40.3" r="1" fill="#fff"/><circle cx="52" cy="40.8" r="1" fill="#fff"/>
<ellipse cx="43" cy="53.5" rx="3.6" ry="1.6" fill="#e0907e"/>
<path d="M12 80C17 71 30 69 42 71C55 69 66 71 72 80Z" fill="#1b1b1b"/>
</g></svg></div>
</body></html>
